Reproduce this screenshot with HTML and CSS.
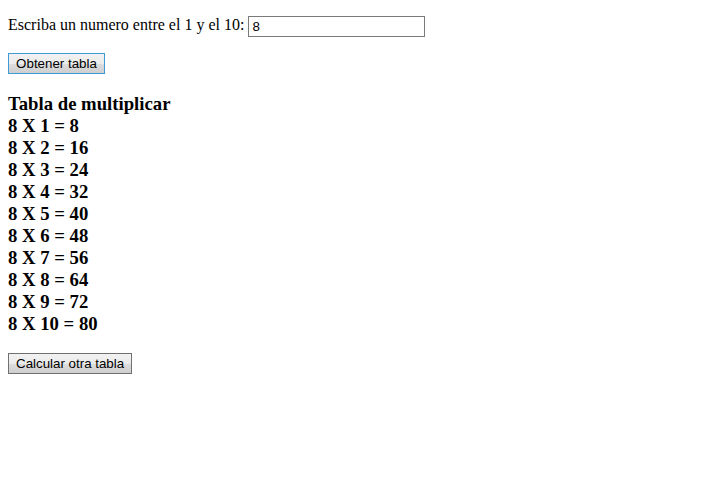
FILE: index.html
```html
<!DOCTYPE html>
<html>
<head>
<meta charset="utf-8">
<link rel="stylesheet" href="styles.css">
</head>
<body>
<form class="form">
  <p class="ask">Escriba un numero entre el 1 y el 10: <input class="num" type="text" value="8"></p>
  <p class="row"><button type="button" class="btn btn-focus">Obtener tabla</button></p>
</form>
<div class="table">
  <div class="line">Tabla de multiplicar</div>
  <div class="line">8 X 1 = 8</div>
  <div class="line">8 X 2 = 16</div>
  <div class="line">8 X 3 = 24</div>
  <div class="line">8 X 4 = 32</div>
  <div class="line">8 X 5 = 40</div>
  <div class="line">8 X 6 = 48</div>
  <div class="line">8 X 7 = 56</div>
  <div class="line">8 X 8 = 64</div>
  <div class="line">8 X 9 = 72</div>
  <div class="line">8 X 10 = 80</div>
</div>
<p class="row"><button type="button" class="btn">Calcular otra tabla</button></p>
</body>
</html>
```
FILE: styles.css
```css
html, body {
  background: #ffffff;
}
body {
  margin: 0;
  padding: 8px;
  font-family: "Liberation Serif", "Times New Roman", serif;
  font-size: 16px;
  color: #000;
}
.form {
  margin: 0;
}
.ask {
  margin: 6px 0 0 0;
  line-height: 22px;
  height: 22px;
}
.num {
  box-sizing: border-box;
  width: 177px;
  height: 21px;
  margin: 0;
  padding: 1px 3px;
  border: 1px solid #7a7a7a;
  font-family: "Liberation Sans", Arial, sans-serif;
  font-size: 13.33px;
  vertical-align: -1px;
  background: #fff;
  color: #000;
  outline: none;
}
.row {
  margin: 17px 0 0 0;
  height: 21px;
}
.btn {
  box-sizing: border-box;
  height: 21px;
  margin: 0;
  padding: 0 7px;
  border: 1px solid #707070;
  background: linear-gradient(#f2f2f2, #ebebeb 50%, #dddddd 51%, #cfcfcf);
  font-family: "Liberation Sans", Arial, sans-serif;
  font-size: 13.33px;
  color: #000;
  display: block;
}
.btn-focus {
  border-color: #3c9bd6;
  width: 97px;
}
.table {
  margin-top: 19px;
  font-weight: bold;
  font-size: 18.72px;
  line-height: 22px;
}
.line {
  height: 22px;
}
.table + .row {
  margin-top: 18px;
}
```
